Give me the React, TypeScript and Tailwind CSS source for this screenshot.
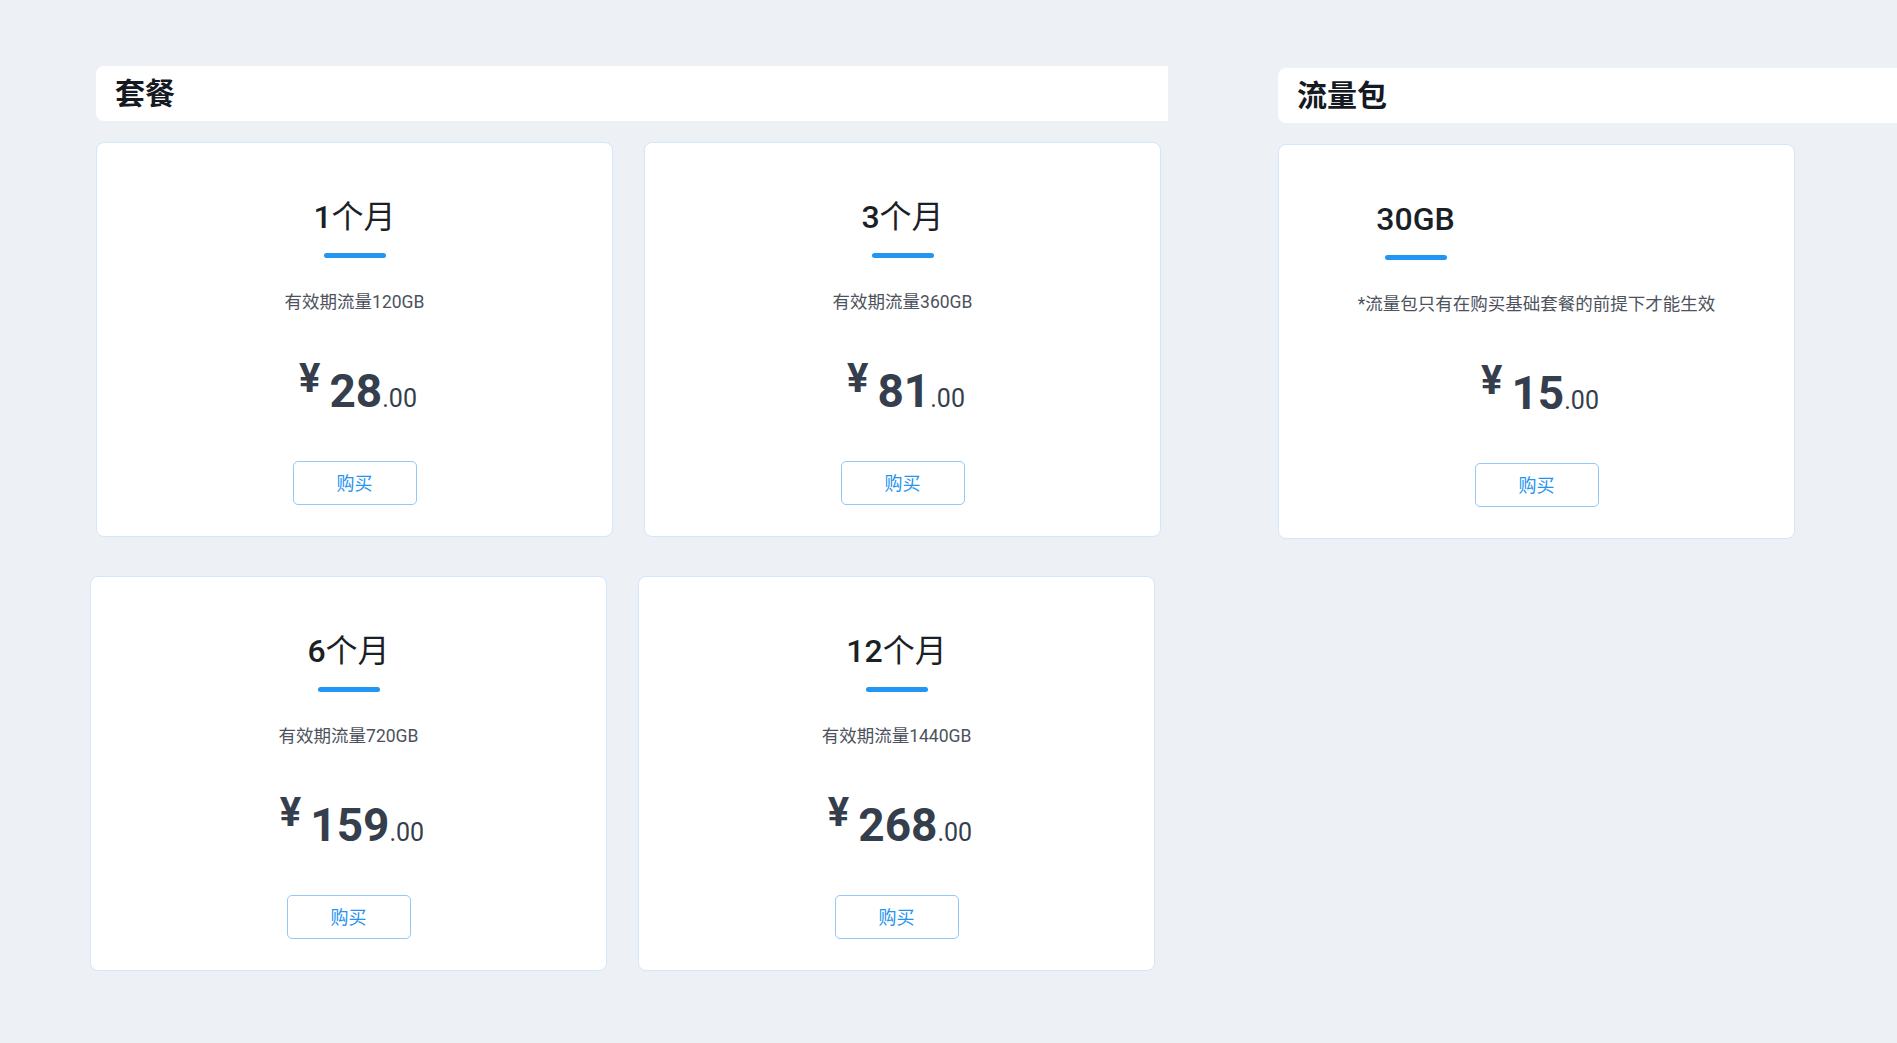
import React from "react";

type Plan = {
  num: string;
  unit: string;
  desc: string;
  price: string;
  offsetTitle?: boolean;
};

function Card({ num, unit, desc, price, offsetTitle }: Plan) {
  const titleBlock = (
    <>
      <div className="text-[32px] leading-[40px] text-[#1b1f26]">
        <span className="font-medium">{num}</span>
        <span className="font-normal">{unit}</span>
      </div>
      <div className="mt-[16px] h-[5px] w-[62px] rounded-full bg-[#2196f3]" />
    </>
  );
  return (
    <div className="w-[517px] h-[395px] shrink-0 rounded-lg border border-[#d3e7fa] bg-white flex flex-col items-center pt-[54px]">
      {offsetTitle ? (
        <div className="self-start w-[273px] flex flex-col items-center">{titleBlock}</div>
      ) : (
        titleBlock
      )}
      <div className="mt-[32px] text-[17.5px] leading-[24px] text-[#4d525c]">{desc}</div>
      <div className="mt-[54px] pl-[7px] flex items-baseline text-[#353e4c]">
        <span className="relative -top-[15px] text-[40px] leading-none font-bold">¥</span>
        <span className="ml-[9px] text-[46px] leading-none font-bold">{price}</span>
        <span className="text-[25px] leading-none">.00</span>
      </div>
      <button className="mt-[47px] w-[124px] h-[44px] rounded-[5px] border border-[#90c8f8] bg-white text-[18px] text-[#2693f0]">
        购买
      </button>
    </div>
  );
}

function Header({ text }: { text: string }) {
  return (
    <div className="h-[55px] bg-white flex items-center pl-[19px] text-[30px] font-bold text-[#151a22] rounded-l-lg">
      {text}
    </div>
  );
}

export default function App() {
  return (
    <div className="w-full h-screen overflow-hidden bg-[#edf1f6] font-['Roboto','Noto_Sans_CJK_SC',sans-serif]">
      <div className="flex pt-[66px]">
        <div className="ml-[96px] w-[1072px] shrink-0">
          <Header text="套餐" />
          <div className="mt-[21px] flex gap-[31px]">
            <Card num="1" unit="个月" desc="有效期流量120GB" price="28" />
            <Card num="3" unit="个月" desc="有效期流量360GB" price="81" />
          </div>
          <div className="mt-[39px] -ml-[6px] flex gap-[31px]">
            <Card num="6" unit="个月" desc="有效期流量720GB" price="159" />
            <Card num="12" unit="个月" desc="有效期流量1440GB" price="268" />
          </div>
        </div>
        <div className="ml-[110px] flex-1 pt-[2px]">
          <Header text="流量包" />
          <div className="mt-[21px]">
            <Card num="30GB" unit="" desc="*流量包只有在购买基础套餐的前提下才能生效" price="15" offsetTitle />
          </div>
        </div>
      </div>
    </div>
  );
}
